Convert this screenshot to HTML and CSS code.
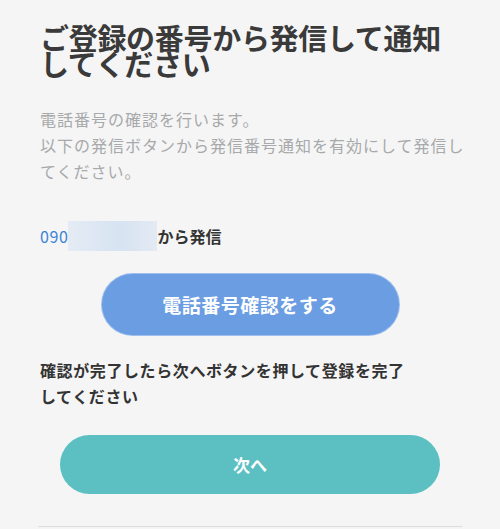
FILE: index.html
```html
<!DOCTYPE html>
<html lang="ja">
<head>
  <meta charset="UTF-8" />
  <title>電話番号確認</title>
  <link rel="stylesheet" href="styles.css">
</head>
<body>
  <main class="verify">
    <h1 class="verify-title">ご登録の番号から発信して通知してください</h1>
    <p class="verify-lead">電話番号の確認を行います。<br>以下の発信ボタンから発信番号通知を有効にして発信してください。</p>

    <p class="caller">
      <span class="caller-num">090</span><span class="caller-mask"></span><span class="caller-suffix">から発信</span>
    </p>

    <div class="btn-row">
      <button class="btn btn-call" type="button">電話番号確認をする</button>
    </div>

    <p class="verify-note">確認が完了したら次へボタンを押して登録を完了してください</p>

    <div class="btn-row">
      <button class="btn btn-next" type="button">次へ</button>
    </div>

    <hr class="divider">
  </main>
</body>
</html>
```

FILE: styles.css
```css
body {
  margin: 0;
  background: #f5f5f5;
  color: #333;
  font-family: "Noto Sans CJK JP", "Noto Sans", sans-serif;
}
.verify {
  padding: 24px 40px 0;
}
.verify-title {
  margin: 0;
  font-size: 29px;
  line-height: 26px;
  font-weight: 700;
  color: #3a3a3a;
  letter-spacing: -0.3px;
}
.verify-lead {
  margin: 30px -6px 0 0;
  font-size: 16px;
  line-height: 26px;
  color: #a7a9ab;
  letter-spacing: 1px;
}
.caller {
  display: flex;
  align-items: center;
  margin: 37px 0 0;
  font-size: 16px;
  height: 30px;
}
.caller-num {
  color: #3b84d6;
  letter-spacing: 0.6px;
}
.caller-mask {
  width: 89px;
  height: 30px;
  background: linear-gradient(90deg, #e4ebf4, #d7e3f2 60%, #e3eaf3);
}
.caller-suffix {
  font-weight: 700;
  color: #333;
}
.btn-row {
  display: flex;
  justify-content: center;
}
.btn {
  border: none;
  border-radius: 31px;
  color: #fff;
  font-family: inherit;
  font-weight: 700;
  cursor: pointer;
}
.btn-call {
  margin-top: 23px;
  width: 297px;
  height: 61px;
  background: #6b9de3;
  font-size: 19px;
  letter-spacing: 0.5px;
  box-shadow: 0 0 0 1px #9fc0ee;
}
.verify-note {
  margin: 22px 0 0;
  width: 375px;
  font-size: 16px;
  line-height: 26px;
  font-weight: 700;
  color: #333;
  letter-spacing: 0.6px;
}
.btn-next {
  margin-top: 26px;
  width: 380px;
  height: 59px;
  border-radius: 30px;
  background: #5cc0c3;
  font-size: 17px;
}
.divider {
  margin: 32px -2px 0;
  border: none;
  border-top: 1px solid #dcdcdc;
}
```
